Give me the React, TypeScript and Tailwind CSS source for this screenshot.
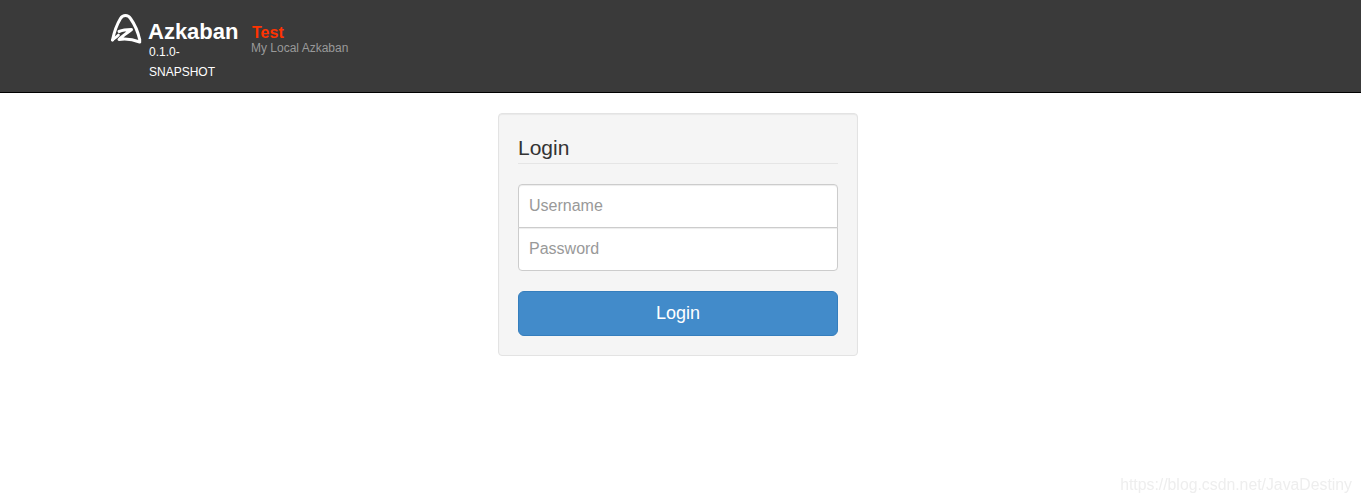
import React from 'react';

const sans = 'font-["Liberation_Sans",Arial,sans-serif]';

const Logo = () => (
    <svg width="32" height="32" viewBox="0 0 32 32" fill="none" stroke="#fff" strokeLinecap="round" strokeLinejoin="round">
        {/* outer arch */}
        <path d="M2.5 27 C4 20 6.5 12 10.5 5.5 C13 1.5 18 1.5 20.5 5.5 C24.5 11 28 19 29.8 27" strokeWidth="3" />
        {/* left foot hooks into the Z */}
        <path d="M2.5 27 C4.5 25.5 6.5 24 8.5 22" strokeWidth="2.6" />
        {/* Z, its bottom bar sweeps out to the right corner */}
        <path d="M9 18.5 C12.5 17 17 16.5 21.5 16.5 C18 19.5 13 22.5 9 26.5 C15 25.5 23 26.5 29.8 29" strokeWidth="3" />
    </svg>
);

export default function App() {
    return (
        <div className={`${sans} min-h-[503px] bg-white relative overflow-hidden`}>
            {/* Top bar */}
            <div className="h-[93px] bg-[#3a3a3a] border-b border-black flex items-start pl-[110px]">
                <div className="mt-[13px] w-[38px] shrink-0">
                    <Logo />
                </div>
                <div className="w-[103px] shrink-0 pt-[19px]">
                    <div className="text-[22px] leading-[26px] font-bold text-white">Azkaban</div>
                    <div className="w-[80px] ml-[1px] text-[12px] leading-[20px] text-white -mt-[3px]">0.1.0-SNAPSHOT</div>
                </div>
                <div className="pt-[24px]">
                    <div className="text-[16px] leading-[17px] font-bold text-[#ff3300] pl-[1px]">Test</div>
                    <div className="text-[12px] leading-[14px] text-[#999999]">My Local Azkaban</div>
                </div>
            </div>

            {/* Login card */}
            <div className="flex justify-center pt-[20px] pr-[5px]">
                <div className="w-[360px] h-[243px] bg-[#f5f5f5] border border-[#e3e3e3] rounded-[4px] p-[19px] shadow-[inset_0_1px_1px_rgba(0,0,0,0.05)]">
                    <h3 className="text-[21px] leading-[23px] font-normal text-[#333333] pt-[3px] pb-[4px] border-b border-[#e5e5e5]">Login</h3>
                    <div className="mt-[20px] flex flex-col">
                        <input
                            placeholder="Username"
                            className="h-[44px] w-full bg-white border border-[#cccccc] rounded-t-[4px] px-[10px] text-[16px] outline-none placeholder:text-[#999999] shadow-[inset_0_1px_1px_rgba(0,0,0,0.075)]"
                        />
                        <input
                            type="password"
                            placeholder="Password"
                            className="h-[44px] -mt-[1px] w-full bg-white border border-[#cccccc] rounded-b-[4px] px-[10px] text-[16px] outline-none placeholder:text-[#999999] shadow-[inset_0_1px_1px_rgba(0,0,0,0.075)]"
                        />
                    </div>
                    <button
                        type="button"
                        className="mt-[20px] h-[45px] w-full bg-[#428bca] border border-[#357ebd] rounded-[6px] text-[18px] text-white"
                    >
                        Login
                    </button>
                </div>
            </div>

            {/* Watermark */}
            <div className="absolute right-[9px] top-[475px] text-[15.8px] leading-[20px] text-[#eeeeee] blur-[0.5px]">
                https://blog.csdn.net/JavaDestiny
            </div>
        </div>
    );
}
